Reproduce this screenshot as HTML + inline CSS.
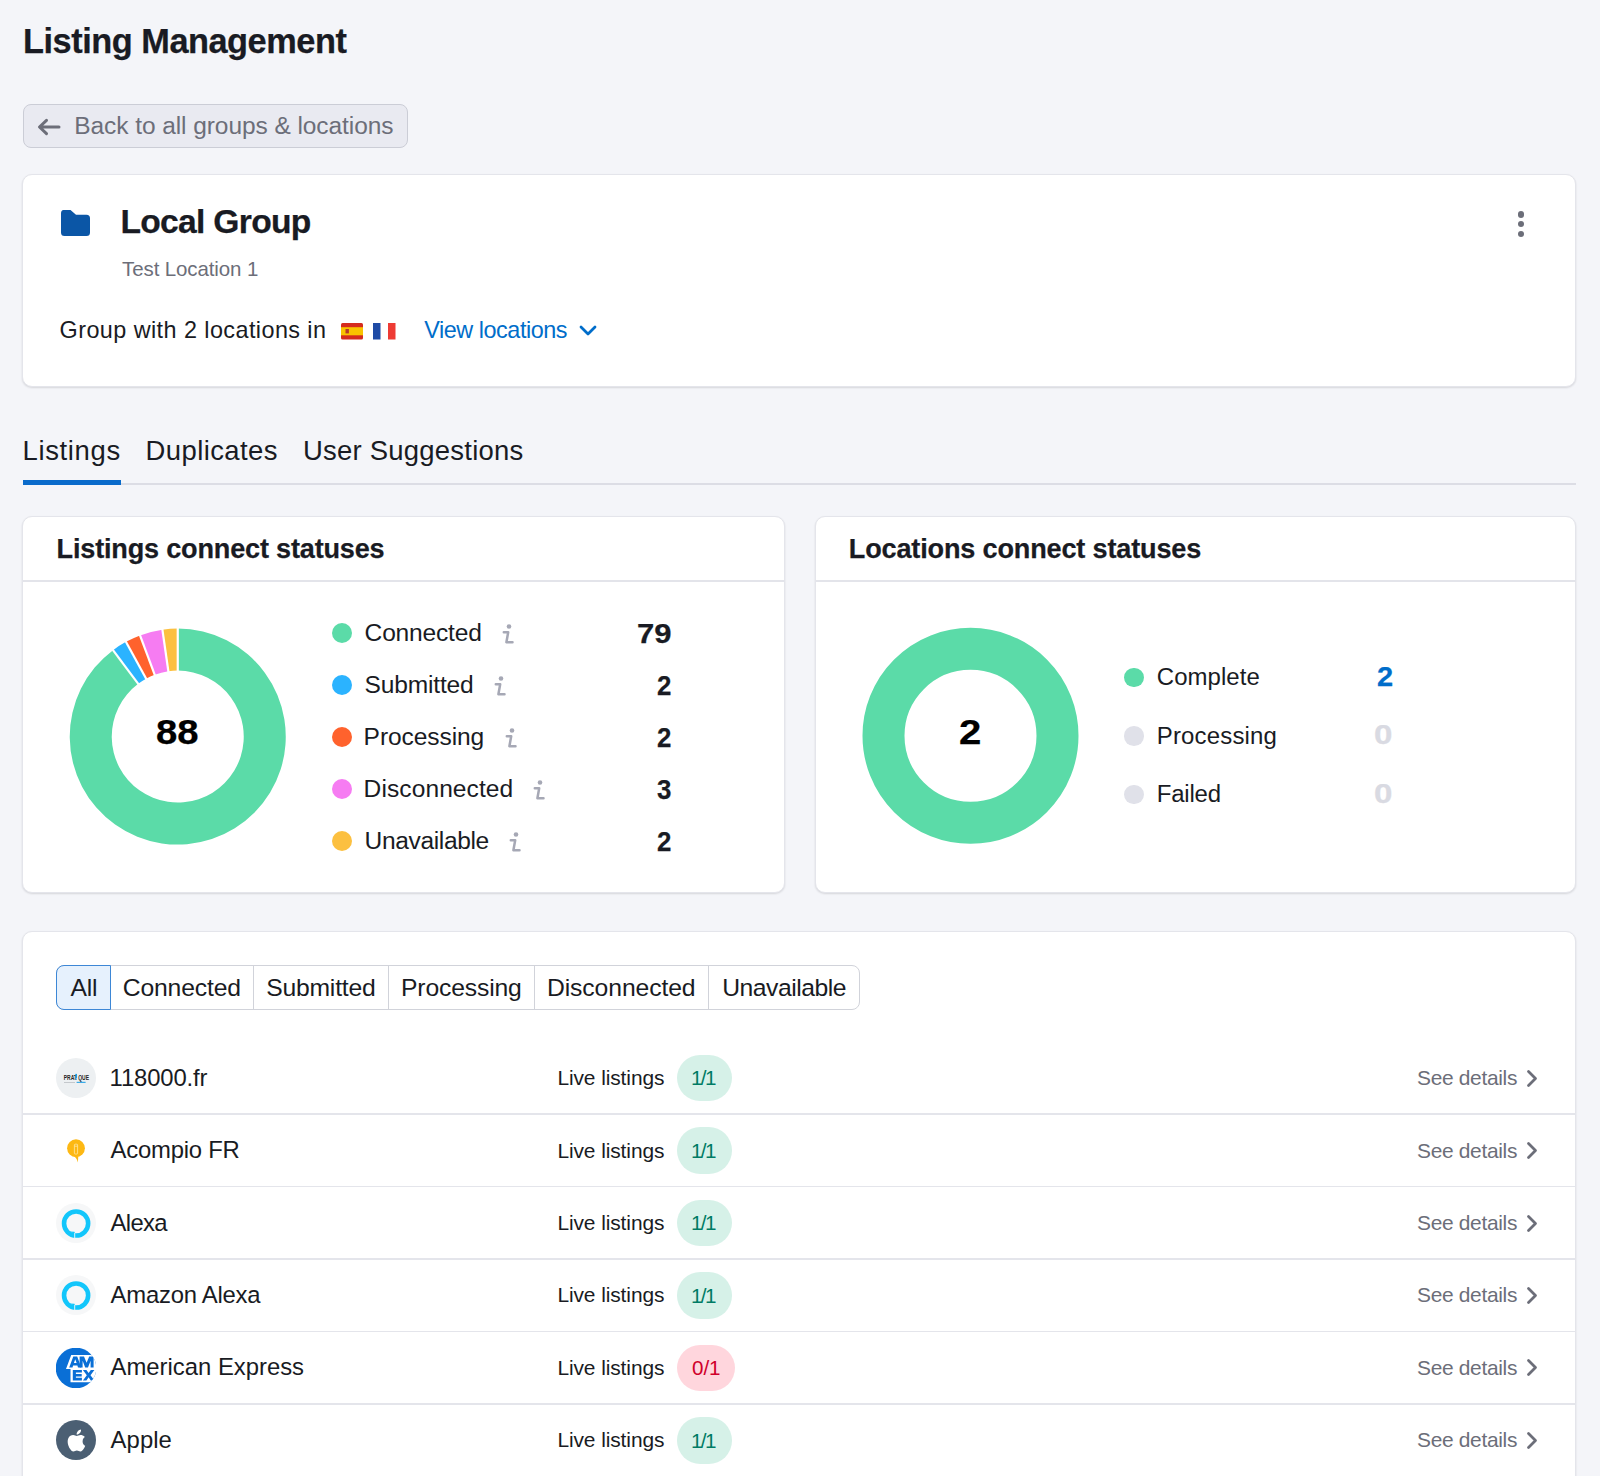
<!DOCTYPE html>
<html><head><meta charset="utf-8"><title>Listing Management</title>
<style>
html,body{margin:0;padding:0}
body{width:1600px;height:1476px;overflow:hidden;background:#F4F5F9;font-family:"Liberation Sans",sans-serif}
#root{position:relative;width:1600px;height:1476px;overflow:hidden;background:#F4F5F9}
.t{position:absolute;white-space:nowrap;line-height:1}
.box,.abs{position:absolute}
.card{position:absolute;background:#fff;border-radius:10px;box-sizing:border-box;border:1px solid #E4E5EB;box-shadow:0 1px 2px rgba(25,27,35,0.14)}
</style></head><body><div id="root">
<div class="box" style="left:23px;top:104px;width:385px;height:44px;border-radius:8px;background:#E9EAF1;border:1px solid #CBCDD6;box-sizing:border-box"></div>
<svg class="abs" style="left:36px;top:117px" width="26" height="20" viewBox="0 0 26 20"><path d="M23,10 H4 M10.5,3.3 L3.5,10 L10.5,16.7" fill="none" stroke="#6C6E79" stroke-width="3" stroke-linecap="round" stroke-linejoin="round"/></svg>
<div class="card" style="left:22px;top:174px;width:1554px;height:213px"></div>
<svg class="abs" style="left:60px;top:209px" width="31" height="28" viewBox="0 0 31 28"><path d="M3.5,1 H10.5 L16,5.8 H26.5 Q30,5.8 30,9.3 V23.5 Q30,27 26.5,27 H4.5 Q1,27 1,23.5 V4.5 Q1,1 3.5,1 Z" fill="#0B56A6"/></svg>
<div class="box" style="left:1517.55px;top:211.30px;width:6.4px;height:6.4px;border-radius:50%;background:#6C6E79"></div>
<div class="box" style="left:1517.55px;top:221.00px;width:6.4px;height:6.4px;border-radius:50%;background:#6C6E79"></div>
<div class="box" style="left:1517.55px;top:230.60px;width:6.4px;height:6.4px;border-radius:50%;background:#6C6E79"></div>
<svg class="abs" style="left:341px;top:323px" width="22" height="16.5" viewBox="0 0 22 16.5"><rect width="22" height="16.5" rx="1.5" fill="#D52B1E"/><rect y="4.2" width="22" height="8.1" fill="#F9C300"/><rect x="4.5" y="6" width="3.4" height="4.4" fill="#B5382B"/></svg>
<svg class="abs" style="left:373px;top:323px" width="22.5" height="16.5" viewBox="0 0 22.5 16.5"><rect width="22.5" height="16.5" rx="1.5" fill="#fff"/><rect width="7.5" height="16.5" fill="#1F4BA5"/><rect x="15" width="7.5" height="16.5" fill="#EE3B34"/></svg>
<svg class="abs" style="left:578px;top:323px" width="20" height="14" viewBox="0 0 20 14"><path d="M3,4 L10,11 L17,4" fill="none" stroke="#006DCA" stroke-width="2.8" stroke-linecap="round" stroke-linejoin="round"/></svg>
<div class="box" style="left:23px;top:483px;width:1553px;height:2px;background:#DCDDE5"></div>
<div class="box" style="left:23px;top:480px;width:98px;height:5px;background:#0A6BCB"></div>
<div class="card" style="left:22px;top:516px;width:763px;height:377px"></div>
<div class="card" style="left:815px;top:516px;width:761px;height:377px"></div>
<div class="box" style="left:23px;top:580px;width:762px;height:2px;background:#E3E4EA"></div>
<div class="box" style="left:816px;top:580px;width:760px;height:2px;background:#E3E4EA"></div>
<svg class="abs" style="left:0;top:0" width="1600" height="1000" viewBox="0 0 1600 1000"><path d="M177.75,628.60 A108,108 0 1 1 113.03,650.14 L138.20,683.76 A66,66 0 1 0 177.75,670.60 Z" fill="#5BDBA8"/>
<path d="M113.03,650.14 A108,108 0 0 1 125.99,641.81 L146.12,678.67 A66,66 0 0 0 138.20,683.76 Z" fill="#2BB3FF"/>
<path d="M125.99,641.81 A108,108 0 0 1 140.01,635.41 L154.69,674.76 A66,66 0 0 0 146.12,678.67 Z" fill="#FF622D"/>
<path d="M140.01,635.41 A108,108 0 0 1 162.38,629.70 L168.36,671.27 A66,66 0 0 0 154.69,674.76 Z" fill="#F67CF2"/>
<path d="M162.38,629.70 A108,108 0 0 1 177.75,628.60 L177.75,670.60 A66,66 0 0 0 168.36,671.27 Z" fill="#FCC040"/>
<line x1="177.75" y1="671.60" x2="177.75" y2="627.60" stroke="#fff" stroke-width="2.2"/>
<line x1="138.80" y1="684.56" x2="112.43" y2="649.34" stroke="#fff" stroke-width="2.2"/>
<line x1="146.60" y1="679.55" x2="125.51" y2="640.93" stroke="#fff" stroke-width="2.2"/>
<line x1="155.03" y1="675.70" x2="139.66" y2="634.47" stroke="#fff" stroke-width="2.2"/>
<line x1="168.50" y1="672.26" x2="162.24" y2="628.71" stroke="#fff" stroke-width="2.2"/><circle cx="970.5" cy="735.8" r="87" fill="none" stroke="#5BDBA8" stroke-width="42"/></svg>
<div class="box" style="left:332px;top:623.10px;width:20px;height:20px;border-radius:50%;background:#5BDBA8"></div>
<div class="box" style="left:332px;top:675.10px;width:20px;height:20px;border-radius:50%;background:#2BB3FF"></div>
<div class="box" style="left:332px;top:727.10px;width:20px;height:20px;border-radius:50%;background:#FF622D"></div>
<div class="box" style="left:332px;top:779.10px;width:20px;height:20px;border-radius:50%;background:#F67CF2"></div>
<div class="box" style="left:332px;top:831.10px;width:20px;height:20px;border-radius:50%;background:#FCC040"></div>
<div class="box" style="left:1124.4px;top:667.80px;width:19.6px;height:19.6px;border-radius:50%;background:#5BDBA8"></div>
<div class="box" style="left:1124.4px;top:726.20px;width:19.6px;height:19.6px;border-radius:50%;background:#E0E1E9"></div>
<div class="box" style="left:1124.4px;top:784.60px;width:19.6px;height:19.6px;border-radius:50%;background:#E0E1E9"></div>
<svg class="abs" style="left:502.0px;top:623.1px" width="13" height="22" viewBox="0 0 13 22"><circle cx="7" cy="3.5" r="2.3" fill="#A6A8B5"/><path d="M1.8,9.3 H6.2 L4.4,19.2 H10.5" fill="none" stroke="#A6A8B5" stroke-width="2.5" stroke-linejoin="round" stroke-linecap="round"/></svg>
<svg class="abs" style="left:494.0px;top:675.1px" width="13" height="22" viewBox="0 0 13 22"><circle cx="7" cy="3.5" r="2.3" fill="#A6A8B5"/><path d="M1.8,9.3 H6.2 L4.4,19.2 H10.5" fill="none" stroke="#A6A8B5" stroke-width="2.5" stroke-linejoin="round" stroke-linecap="round"/></svg>
<svg class="abs" style="left:504.5px;top:727.1px" width="13" height="22" viewBox="0 0 13 22"><circle cx="7" cy="3.5" r="2.3" fill="#A6A8B5"/><path d="M1.8,9.3 H6.2 L4.4,19.2 H10.5" fill="none" stroke="#A6A8B5" stroke-width="2.5" stroke-linejoin="round" stroke-linecap="round"/></svg>
<svg class="abs" style="left:532.5px;top:779.1px" width="13" height="22" viewBox="0 0 13 22"><circle cx="7" cy="3.5" r="2.3" fill="#A6A8B5"/><path d="M1.8,9.3 H6.2 L4.4,19.2 H10.5" fill="none" stroke="#A6A8B5" stroke-width="2.5" stroke-linejoin="round" stroke-linecap="round"/></svg>
<svg class="abs" style="left:509.0px;top:831.1px" width="13" height="22" viewBox="0 0 13 22"><circle cx="7" cy="3.5" r="2.3" fill="#A6A8B5"/><path d="M1.8,9.3 H6.2 L4.4,19.2 H10.5" fill="none" stroke="#A6A8B5" stroke-width="2.5" stroke-linejoin="round" stroke-linecap="round"/></svg>
<div class="card" style="left:22px;top:931px;width:1554px;height:600px"></div>
<div class="box" style="left:56px;top:964.5px;width:804px;height:45px;border:1px solid #D1D3DA;border-radius:8px;box-sizing:border-box"></div>
<div class="box" style="left:252.5px;top:965px;width:1px;height:44px;background:#D1D3DA"></div>
<div class="box" style="left:387.9px;top:965px;width:1px;height:44px;background:#D1D3DA"></div>
<div class="box" style="left:533.9px;top:965px;width:1px;height:44px;background:#D1D3DA"></div>
<div class="box" style="left:708.0px;top:965px;width:1px;height:44px;background:#D1D3DA"></div>
<div class="box" style="left:56px;top:964.5px;width:55px;height:45px;border:1.3px solid #3D87D6;border-radius:8px 0 0 8px;box-sizing:border-box;background:#E6F1FD"></div>
<div class="box" style="left:23px;top:1113.45px;width:1553px;height:1.5px;background:#E4E5EB"></div>
<div class="box" style="left:677px;top:1054.8px;width:55.2px;height:46.6px;border-radius:23.3px;background:#D6F1E8"></div>
<svg class="abs" style="left:1524px;top:1068.6px" width="16" height="19" viewBox="0 0 16 19"><path d="M4.5,2.5 L11.5,9.5 L4.5,16.5" fill="none" stroke="#6C6E79" stroke-width="2.8" stroke-linecap="round" stroke-linejoin="round"/></svg>
<div class="box" style="left:23px;top:1185.90px;width:1553px;height:1.5px;background:#E4E5EB"></div>
<div class="box" style="left:677px;top:1127.2px;width:55.2px;height:46.6px;border-radius:23.3px;background:#D6F1E8"></div>
<svg class="abs" style="left:1524px;top:1141.0px" width="16" height="19" viewBox="0 0 16 19"><path d="M4.5,2.5 L11.5,9.5 L4.5,16.5" fill="none" stroke="#6C6E79" stroke-width="2.8" stroke-linecap="round" stroke-linejoin="round"/></svg>
<div class="box" style="left:23px;top:1258.35px;width:1553px;height:1.5px;background:#E4E5EB"></div>
<div class="box" style="left:677px;top:1199.7px;width:55.2px;height:46.6px;border-radius:23.3px;background:#D6F1E8"></div>
<svg class="abs" style="left:1524px;top:1213.5px" width="16" height="19" viewBox="0 0 16 19"><path d="M4.5,2.5 L11.5,9.5 L4.5,16.5" fill="none" stroke="#6C6E79" stroke-width="2.8" stroke-linecap="round" stroke-linejoin="round"/></svg>
<div class="box" style="left:23px;top:1330.80px;width:1553px;height:1.5px;background:#E4E5EB"></div>
<div class="box" style="left:677px;top:1272.1px;width:55.2px;height:46.6px;border-radius:23.3px;background:#D6F1E8"></div>
<svg class="abs" style="left:1524px;top:1285.9px" width="16" height="19" viewBox="0 0 16 19"><path d="M4.5,2.5 L11.5,9.5 L4.5,16.5" fill="none" stroke="#6C6E79" stroke-width="2.8" stroke-linecap="round" stroke-linejoin="round"/></svg>
<div class="box" style="left:23px;top:1403.25px;width:1553px;height:1.5px;background:#E4E5EB"></div>
<div class="box" style="left:677px;top:1344.6px;width:57.6px;height:46.6px;border-radius:23.3px;background:#FFD6DD"></div>
<svg class="abs" style="left:1524px;top:1358.4px" width="16" height="19" viewBox="0 0 16 19"><path d="M4.5,2.5 L11.5,9.5 L4.5,16.5" fill="none" stroke="#6C6E79" stroke-width="2.8" stroke-linecap="round" stroke-linejoin="round"/></svg>
<div class="box" style="left:677px;top:1417.0px;width:55.2px;height:46.6px;border-radius:23.3px;background:#D6F1E8"></div>
<svg class="abs" style="left:1524px;top:1430.8px" width="16" height="19" viewBox="0 0 16 19"><path d="M4.5,2.5 L11.5,9.5 L4.5,16.5" fill="none" stroke="#6C6E79" stroke-width="2.8" stroke-linecap="round" stroke-linejoin="round"/></svg>
<svg class="abs" style="left:56px;top:1058.1px" width="40" height="40" viewBox="0 0 40 40"><circle cx="20" cy="20" r="20" fill="#EDF0F2"/><text x="7.8" y="21.6" font-family="Liberation Sans" font-weight="700" font-size="7.6" textLength="25.2" lengthAdjust="spacingAndGlyphs" fill="#222">PRAT QUE</text><rect x="19.3" y="15.9" width="1.7" height="4.2" fill="#1E9BE0"/><rect x="19.3" y="20.6" width="1.7" height="1.1" fill="#1E9BE0"/><rect x="8" y="24.2" width="11" height="0.5" fill="#9AA0A6"/><rect x="20.6" y="23.8" width="9" height="1.1" fill="#2AA4E6"/></svg>
<svg class="abs" style="left:56px;top:1130.5px" width="40" height="40" viewBox="0 0 40 40"><circle cx="20" cy="17.2" r="8.9" fill="#FDB813"/><path d="M17.2,24.6 Q20.5,26.5 21.9,31.4 L22.3,25.2 Z" fill="#FDB813"/><rect x="18.4" y="13.2" width="3.2" height="9.8" rx="0.8" fill="none" stroke="#FFE7A3" stroke-width="0.8"/><path d="M18.4,15.2 H21.6" stroke="#FFE7A3" stroke-width="0.8"/></svg>
<svg class="abs" style="left:56px;top:1203.0px" width="40" height="40" viewBox="0 0 40 40"><circle cx="20" cy="20" r="20" fill="#F6F7F8"/><circle cx="20.1" cy="20.5" r="12.05" fill="none" stroke="#12C6FB" stroke-width="4.6"/><path d="M13.6,28.6 Q18.2,29.6 18.2,35 L19.6,33.5 L18.5,28.8 Z" fill="#12C6FB"/><path d="M18.7,30 V35.6" stroke="#F6F7F8" stroke-width="0.9"/></svg>
<svg class="abs" style="left:56px;top:1275.4px" width="40" height="40" viewBox="0 0 40 40"><circle cx="20" cy="20" r="20" fill="#F6F7F8"/><circle cx="20.1" cy="20.5" r="12.05" fill="none" stroke="#12C6FB" stroke-width="4.6"/><path d="M13.6,28.6 Q18.2,29.6 18.2,35 L19.6,33.5 L18.5,28.8 Z" fill="#12C6FB"/><path d="M18.7,30 V35.6" stroke="#F6F7F8" stroke-width="0.9"/></svg>
<svg class="abs" style="left:56px;top:1347.9px" width="40" height="40" viewBox="0 0 40 40"><defs><clipPath id="amc"><circle cx="20" cy="20" r="20.3"/></clipPath></defs><circle cx="20" cy="20" r="20.3" fill="#0A6FD6"/><g clip-path="url(#amc)"><path d="M15.2,7 H42 V34.2 H14.5 V21 H10 Z" fill="#fff"/><path d="M13.2,19.4 L17.3,8.6 H21.2 L25.3,19.4 H22 L21.4,17.6 H17.1 L16.5,19.4 Z M17.9,15.1 H20.6 L19.25,11.2 Z" fill="#0A6FD6"/><path d="M23.6,19.4 V8.6 H28 L30.6,14.8 L33.2,8.6 H37.6 V19.4 H34.6 V12.8 L32,19.4 H29.2 L26.6,12.8 V19.4 Z" fill="#0A6FD6"/><path d="M16.8,22 H25.9 V24.6 H19.9 V25.9 H25.7 V28.4 H19.9 V29.8 H25.9 V32.4 H16.8 Z" fill="#0A6FD6"/><path d="M26.9,22 H30.4 L32.6,25.1 L34.8,22 H38.4 L34.5,27.2 L38.4,32.4 H34.8 L32.6,29.3 L30.4,32.4 H26.9 L30.8,27.2 Z" fill="#0A6FD6"/></g></svg>
<svg class="abs" style="left:56px;top:1420.3px" width="40" height="40" viewBox="0 0 40 40"><circle cx="20" cy="20" r="20" fill="#4B5F73"/><path d="M26.6,21.2c0-2.7 2.2-4 2.3-4.1-1.3-1.9-3.3-2.1-4-2.2-1.7-.2-3.3 1-4.2 1-.9 0-2.2-1-3.6-.9-1.9 0-3.6 1.1-4.5 2.7-1.9 3.4-.5 8.3 1.4 11 .9 1.3 2 2.8 3.4 2.8 1.4-.1 1.9-.9 3.5-.9s2.1.9 3.5.9c1.5 0 2.4-1.4 3.3-2.7 1-1.5 1.5-3 1.5-3.1-.1 0-2.6-1-2.6-4.5zM23.9,13.1c.8-.9 1.3-2.2 1.1-3.5-1.1.1-2.4.7-3.2 1.6-.7.8-1.3 2.1-1.2 3.4 1.3.1 2.5-.6 3.3-1.5z" fill="#fff"/></svg>
<span class="t" style="left:23.00px;top:24.04px;font-size:34.33px;font-weight:700;color:#191B23;-webkit-text-stroke:0.25px currentColor;letter-spacing:-0.473px;">Listing Management</span>
<span class="t" style="left:74.25px;top:113.82px;font-size:24.49px;font-weight:400;color:#6C6E79;letter-spacing:-0.067px;">Back to all groups &amp; locations</span>
<span class="t" style="left:120.40px;top:205.23px;font-size:33.63px;font-weight:700;color:#191B23;-webkit-text-stroke:0.25px currentColor;letter-spacing:-0.700px;">Local Group</span>
<span class="t" style="left:122.10px;top:259.45px;font-size:20.49px;font-weight:400;color:#6C6E79;letter-spacing:-0.114px;">Test Location 1</span>
<span class="t" style="left:59.60px;top:318.99px;font-size:23.40px;font-weight:400;color:#191B23;letter-spacing:0.428px;">Group with 2 locations in</span>
<span class="t" style="left:424.30px;top:318.99px;font-size:23.40px;font-weight:400;color:#006DCA;letter-spacing:-0.454px;">View locations</span>
<span class="t" style="left:22.60px;top:437.15px;font-size:27.47px;font-weight:400;color:#191B23;letter-spacing:0.628px;">Listings</span>
<span class="t" style="left:145.60px;top:437.15px;font-size:27.47px;font-weight:400;color:#191B23;letter-spacing:0.398px;">Duplicates</span>
<span class="t" style="left:302.90px;top:437.15px;font-size:27.47px;font-weight:400;color:#191B23;letter-spacing:0.241px;">User Suggestions</span>
<span class="t" style="left:56.60px;top:535.19px;font-size:27.07px;font-weight:700;color:#191B23;-webkit-text-stroke:0.25px currentColor;letter-spacing:-0.180px;">Listings connect statuses</span>
<span class="t" style="left:848.80px;top:535.19px;font-size:27.07px;font-weight:700;color:#191B23;-webkit-text-stroke:0.25px currentColor;letter-spacing:-0.159px;">Locations connect statuses</span>
<span class="t" style="left:156.00px;top:715.47px;font-size:34.88px;font-weight:700;color:#000;transform:scaleX(1.0964);transform-origin:0 0;-webkit-text-stroke:0.25px currentColor;">88</span>
<span class="t" style="left:959.44px;top:715.24px;font-size:34.45px;font-weight:700;color:#000;transform:scaleX(1.1647);transform-origin:0 0;-webkit-text-stroke:0.25px currentColor;">2</span>
<span class="t" style="left:364.60px;top:620.61px;font-size:24.56px;font-weight:400;color:#191B23;letter-spacing:-0.185px;">Connected</span>
<span class="t" style="left:636.60px;top:619.11px;font-size:28.34px;font-weight:700;color:#191B23;transform:scaleX(1.0956);transform-origin:0 0;-webkit-text-stroke:0.25px currentColor;">79</span>
<span class="t" style="left:364.60px;top:672.61px;font-size:24.56px;font-weight:400;color:#191B23;letter-spacing:-0.184px;">Submitted</span>
<span class="t" style="left:656.60px;top:671.11px;font-size:28.34px;font-weight:700;color:#191B23;transform:scaleX(0.9133);transform-origin:0 0;-webkit-text-stroke:0.25px currentColor;">2</span>
<span class="t" style="left:363.60px;top:724.61px;font-size:24.56px;font-weight:400;color:#191B23;letter-spacing:-0.086px;">Processing</span>
<span class="t" style="left:656.60px;top:723.11px;font-size:28.34px;font-weight:700;color:#191B23;transform:scaleX(0.9133);transform-origin:0 0;-webkit-text-stroke:0.25px currentColor;">2</span>
<span class="t" style="left:363.60px;top:776.61px;font-size:24.56px;font-weight:400;color:#191B23;letter-spacing:0.084px;">Disconnected</span>
<span class="t" style="left:656.60px;top:775.11px;font-size:28.34px;font-weight:700;color:#191B23;transform:scaleX(0.9133);transform-origin:0 0;-webkit-text-stroke:0.25px currentColor;">3</span>
<span class="t" style="left:364.60px;top:828.61px;font-size:24.56px;font-weight:400;color:#191B23;letter-spacing:-0.362px;">Unavailable</span>
<span class="t" style="left:656.60px;top:827.11px;font-size:28.34px;font-weight:700;color:#191B23;transform:scaleX(0.9133);transform-origin:0 0;-webkit-text-stroke:0.25px currentColor;">2</span>
<span class="t" style="left:1156.80px;top:665.20px;font-size:23.98px;font-weight:400;color:#191B23;letter-spacing:0.050px;">Complete</span>
<span class="t" style="left:1376.60px;top:663.96px;font-size:26.74px;font-weight:700;color:#006DCA;transform:scaleX(1.0857);transform-origin:0 0;-webkit-text-stroke:0.25px currentColor;">2</span>
<span class="t" style="left:1156.80px;top:723.60px;font-size:23.98px;font-weight:400;color:#191B23;letter-spacing:0.174px;">Processing</span>
<span class="t" style="left:1374.46px;top:722.36px;font-size:26.74px;font-weight:700;color:#D9DAE2;transform:scaleX(1.2385);transform-origin:0 0;-webkit-text-stroke:0.25px currentColor;">0</span>
<span class="t" style="left:1156.80px;top:782.00px;font-size:23.98px;font-weight:400;color:#191B23;letter-spacing:-0.210px;">Failed</span>
<span class="t" style="left:1374.46px;top:780.76px;font-size:26.74px;font-weight:700;color:#D9DAE2;transform:scaleX(1.2385);transform-origin:0 0;-webkit-text-stroke:0.25px currentColor;">0</span>
<span class="t" style="left:70.60px;top:975.88px;font-size:24.71px;font-weight:400;color:#191B23;letter-spacing:-0.226px;">All</span>
<span class="t" style="left:122.70px;top:975.88px;font-size:24.71px;font-weight:400;color:#191B23;letter-spacing:-0.148px;">Connected</span>
<span class="t" style="left:266.20px;top:975.88px;font-size:24.71px;font-weight:400;color:#191B23;letter-spacing:-0.216px;">Submitted</span>
<span class="t" style="left:401.00px;top:975.88px;font-size:24.71px;font-weight:400;color:#191B23;letter-spacing:-0.155px;">Processing</span>
<span class="t" style="left:547.00px;top:975.88px;font-size:24.71px;font-weight:400;color:#191B23;letter-spacing:-0.105px;">Disconnected</span>
<span class="t" style="left:722.20px;top:975.88px;font-size:24.71px;font-weight:400;color:#191B23;letter-spacing:-0.488px;">Unavailable</span>
<span class="t" style="left:109.60px;top:1065.60px;font-size:23.86px;font-weight:400;color:#191B23;letter-spacing:-0.138px;">118000.fr</span>
<span class="t" style="left:557.40px;top:1068.08px;font-size:20.93px;font-weight:400;color:#191B23;letter-spacing:-0.090px;">Live listings</span>
<span class="t" style="left:691.00px;top:1068.33px;font-size:20.64px;font-weight:400;color:#007C65;letter-spacing:-1.650px;">1/1</span>
<span class="t" style="left:1417.00px;top:1068.08px;font-size:20.93px;font-weight:400;color:#6C6E79;letter-spacing:-0.316px;">See details</span>
<span class="t" style="left:110.60px;top:1138.05px;font-size:23.86px;font-weight:400;color:#191B23;letter-spacing:-0.226px;">Acompio FR</span>
<span class="t" style="left:557.40px;top:1140.53px;font-size:20.93px;font-weight:400;color:#191B23;letter-spacing:-0.090px;">Live listings</span>
<span class="t" style="left:691.00px;top:1140.78px;font-size:20.64px;font-weight:400;color:#007C65;letter-spacing:-1.650px;">1/1</span>
<span class="t" style="left:1417.00px;top:1140.53px;font-size:20.93px;font-weight:400;color:#6C6E79;letter-spacing:-0.316px;">See details</span>
<span class="t" style="left:110.60px;top:1210.50px;font-size:23.86px;font-weight:400;color:#191B23;letter-spacing:-0.703px;">Alexa</span>
<span class="t" style="left:557.40px;top:1212.98px;font-size:20.93px;font-weight:400;color:#191B23;letter-spacing:-0.090px;">Live listings</span>
<span class="t" style="left:691.00px;top:1213.23px;font-size:20.64px;font-weight:400;color:#007C65;letter-spacing:-1.650px;">1/1</span>
<span class="t" style="left:1417.00px;top:1212.98px;font-size:20.93px;font-weight:400;color:#6C6E79;letter-spacing:-0.316px;">See details</span>
<span class="t" style="left:110.60px;top:1282.95px;font-size:23.86px;font-weight:400;color:#191B23;letter-spacing:-0.234px;">Amazon Alexa</span>
<span class="t" style="left:557.40px;top:1285.43px;font-size:20.93px;font-weight:400;color:#191B23;letter-spacing:-0.090px;">Live listings</span>
<span class="t" style="left:691.00px;top:1285.68px;font-size:20.64px;font-weight:400;color:#007C65;letter-spacing:-1.650px;">1/1</span>
<span class="t" style="left:1417.00px;top:1285.43px;font-size:20.93px;font-weight:400;color:#6C6E79;letter-spacing:-0.316px;">See details</span>
<span class="t" style="left:110.60px;top:1355.40px;font-size:23.86px;font-weight:400;color:#191B23;letter-spacing:-0.011px;">American Express</span>
<span class="t" style="left:557.40px;top:1357.88px;font-size:20.93px;font-weight:400;color:#191B23;letter-spacing:-0.090px;">Live listings</span>
<span class="t" style="left:692.10px;top:1358.13px;font-size:20.64px;font-weight:400;color:#D0002B;letter-spacing:-0.100px;">0/1</span>
<span class="t" style="left:1417.00px;top:1357.88px;font-size:20.93px;font-weight:400;color:#6C6E79;letter-spacing:-0.316px;">See details</span>
<span class="t" style="left:110.60px;top:1427.85px;font-size:23.86px;font-weight:400;color:#191B23;letter-spacing:0.062px;">Apple</span>
<span class="t" style="left:557.40px;top:1430.33px;font-size:20.93px;font-weight:400;color:#191B23;letter-spacing:-0.090px;">Live listings</span>
<span class="t" style="left:691.00px;top:1430.58px;font-size:20.64px;font-weight:400;color:#007C65;letter-spacing:-1.650px;">1/1</span>
<span class="t" style="left:1417.00px;top:1430.33px;font-size:20.93px;font-weight:400;color:#6C6E79;letter-spacing:-0.316px;">See details</span>
</div></body></html>
